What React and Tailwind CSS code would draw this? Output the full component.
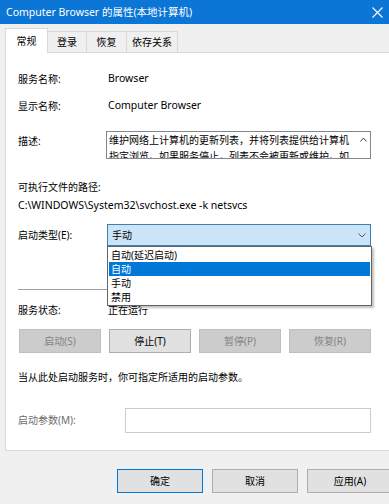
import React from 'react';

const TABS = ['常规', '登录', '恢复', '依存关系'];
const TAB_WIDTHS = ['w-[43px]', 'w-[39px]', 'w-[40px]', 'w-[51px]'];

const START_TYPES = ['自动(延迟启动)', '自动', '手动', '禁用'];

const ServiceButton = ({ label, disabled, isDefault, width = 'w-[82px]' }) => (
  <div
    className={`${width} h-[24px] flex items-center justify-center border shrink-0 ${
      disabled
        ? 'bg-[#cccccc] border-[#bfbfbf] text-[#838383]'
        : isDefault
        ? 'bg-[#e1e1e1] border-[#0078d7] text-black'
        : 'bg-[#e1e1e1] border-[#adadad] text-black'
    }`}
  >
    {label}
  </div>
);

const App = () => {
  return (
    <div className="w-[389px] h-[504px] overflow-hidden bg-[#f0f0f0] text-black font-['Noto_Sans','Noto_Sans_CJK_SC',sans-serif] text-[10px]">
      {/* Title bar */}
      <div className="h-[24px] bg-[#0b76d5] flex items-center justify-between pl-[6px] pr-[5px] text-white">
        <span className="text-[10.5px] leading-none">Computer Browser 的属性(本地计算机)</span>
        <svg width="11" height="11" viewBox="0 0 11 11" className="mr-[1px]">
          <path d="M0.5 0.5 L10.5 10.5 M10.5 0.5 L0.5 10.5" stroke="white" strokeWidth="1.1" />
        </svg>
      </div>

      {/* Tabs */}
      <div className="h-[28px] pl-[5px] flex items-end">
        {TABS.map((tab, i) => (
          <div
            key={tab}
            className={`${TAB_WIDTHS[i]} flex items-center justify-center border-t border-r border-[#d9d9d9] ${
              i === 0
                ? 'h-[25px] bg-white border-l -mb-px relative z-10'
                : 'h-[21px] bg-[#f0f0f0]'
            }`}
          >
            {tab}
          </div>
        ))}
      </div>

      {/* Panel */}
      <div className="relative ml-[5px] -mr-[4px] h-[399px] bg-white border border-[#d9d9d9] pl-[12px]">
        {/* Service name */}
        <div className="flex items-center h-[20px] mt-[16px]">
          <div className="w-[90px]">服务名称:</div>
          <div className="text-[10.5px]">Browser</div>
        </div>

        {/* Display name */}
        <div className="flex items-center h-[20px] mt-[7px]">
          <div className="w-[90px]">显示名称:</div>
          <div className="text-[10.5px]">Computer Browser</div>
        </div>

        {/* Description */}
        <div className="flex items-start mt-[15px]">
          <div className="w-[88px] pt-[1px] leading-[18px]">描述:</div>
          <div className="w-[265px] h-[28px] border border-[#828790] flex overflow-hidden">
            <div className="flex-1 pl-[2px] leading-[16px] overflow-hidden">
              <div className="whitespace-nowrap overflow-hidden">维护网络上计算机的更新列表，并将列表提供给计算机</div>
              <div className="whitespace-nowrap overflow-hidden">指定浏览。如果服务停止，列表不会被更新或维护。如</div>
            </div>
            <div className="w-[14px] flex justify-center pt-[5px]">
              <svg width="7" height="5" viewBox="0 0 7 5">
                <path d="M0.5 4.5 L3.5 1 L6.5 4.5" stroke="#444" strokeWidth="1" fill="none" />
              </svg>
            </div>
          </div>
        </div>

        {/* Executable path */}
        <div className="h-[18px] leading-[18px] mt-[19px]">可执行文件的路径:</div>
        <div className="h-[18px] leading-[18px] text-[10.5px]">C:\WINDOWS\System32\svchost.exe -k netsvcs</div>

        {/* Startup type */}
        <div className="flex items-center mt-[10px]">
          <div className="w-[89px]">启动类型(E):</div>
          <div className="w-[264px] h-[22px] bg-[#cce4f7] border border-[#3c7fb1] flex items-center justify-between pl-[4px] pr-[4px]">
            <span>手动</span>
            <svg width="8" height="5" viewBox="0 0 8 5">
              <path d="M0.5 0.5 L4 4 L7.5 0.5" stroke="#555" strokeWidth="1" fill="none" />
            </svg>
          </div>
        </div>

        {/* Separator */}
        <div className="mt-[43px] h-px w-[353px] bg-[#a0a0a0]" />

        {/* Service status */}
        <div className="flex items-center h-[18px] mt-[11px]">
          <div className="w-[90px]">服务状态:</div>
          <div>正在运行</div>
        </div>

        {/* Service buttons */}
        <div className="flex gap-[8px] mt-[10px] ml-[1px]">
          <ServiceButton label="启动(S)" disabled />
          <ServiceButton label="停止(T)" />
          <ServiceButton label="暂停(P)" disabled />
          <ServiceButton label="恢复(R)" disabled />
        </div>

        <div className="h-[18px] leading-[18px] mt-[15px]">当从此处启动服务时，你可指定所适用的启动参数。</div>

        {/* Start parameters */}
        <div className="flex items-center mt-[22px]">
          <div className="w-[107px] text-[#6d6d6d]">启动参数(M):</div>
          <div className="w-[246px] h-[25px] border border-[#cccccc] bg-white" />
        </div>

        {/* Dropdown list (open) */}
        <div className="absolute left-[101px] top-[193px] w-[265px] bg-white border border-[#646464] shadow-[2px_2px_2px_rgba(0,0,0,0.25)] py-px">
          {START_TYPES.map((t) => (
            <div
              key={t}
              className={`h-[14px] leading-[14px] pl-[2px] mx-px ${
                t === '自动' ? 'bg-[#0078d7] text-white' : ''
              }`}
            >
              {t}
            </div>
          ))}
        </div>
      </div>

      {/* Dialog buttons */}
      <div className="flex gap-[9px] pl-[117px] mt-[18px]">
        <ServiceButton label="确定" isDefault width="w-[86px]" />
        <ServiceButton label="取消" width="w-[86px]" />
        <ServiceButton label="应用(A)" width="w-[86px]" />
      </div>
    </div>
  );
};

export default App;
